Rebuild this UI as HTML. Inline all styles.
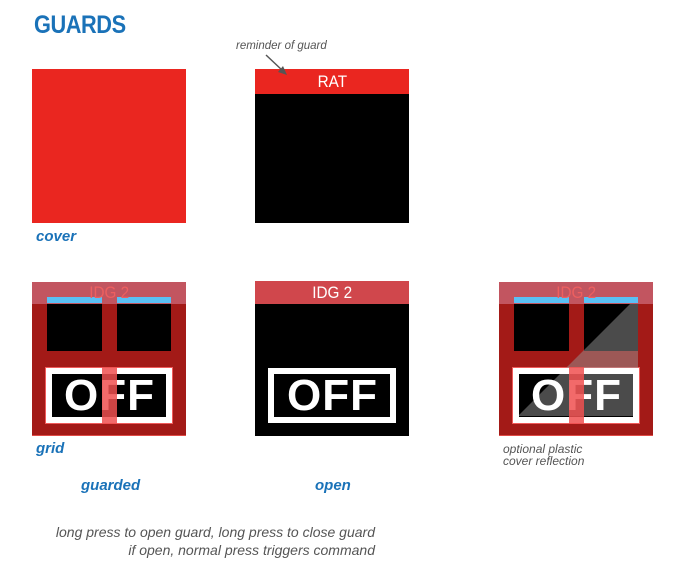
<!DOCTYPE html>
<html><head><style>
*{margin:0;padding:0;box-sizing:border-box}
body{width:685px;height:578px;background:#fff;position:relative;overflow:hidden;font-family:"Liberation Sans",sans-serif}
.a{position:absolute}
.lbl{position:absolute;color:#1a72b8;font-weight:bold;font-style:italic;font-size:15px}
.off{position:absolute;border:6px solid #fff;color:#fff;font-weight:bold;font-size:44px;text-align:center;line-height:43px;letter-spacing:1px;text-indent:1px}
.hdr{position:absolute;color:#fff;font-size:17px;text-align:center;line-height:23px}
.hdr span{display:inline-block;transform:scaleX(0.9)}
.gray{color:#555;font-style:italic;font-size:12.5px;position:absolute}
</style></head><body>
<div class="a" style="left:34px;top:11px;color:#1a72b8;font-weight:bold;font-size:25px;letter-spacing:-0.5px;transform:scaleX(0.87);transform-origin:left">GUARDS</div>

<div class="a" style="left:32px;top:69px;width:154px;height:154px;background:#ea2620"></div>
<div class="lbl" style="left:36px;top:228px">cover</div>

<div class="gray" style="left:236px;top:40px;font-size:11.5px">reminder of guard</div>
<div class="a" style="left:255px;top:69px;width:154px;height:154px;background:#000"></div>
<div class="hdr" style="left:255px;top:69px;width:154px;height:25px;background:#ea2620;line-height:25px"><span>RAT</span></div>
<svg class="a" style="left:260px;top:50px" width="40" height="30"><line x1="6" y1="5" x2="23" y2="21" stroke="#555" stroke-width="1.5"/><polygon points="27,25 18,22 23,16" fill="#555"/></svg>

<!-- grid -->
<div class="a" style="left:32px;top:282px;width:154px;height:154px;background:#a31a17;border-bottom:1px solid #e04a45"></div>
<div class="a" style="left:47px;top:303px;width:55px;height:48px;background:#000"></div>
<div class="a" style="left:117px;top:303px;width:54px;height:48px;background:#000"></div>
<div class="a" style="left:45px;top:367px;width:128px;height:57px;background:#f05a5a"></div>
<div class="off" style="left:46px;top:368px;width:126px;height:55px;background:#000">OFF</div>
<div class="a" style="left:102px;top:367px;width:15px;height:57px;background:rgba(240,80,80,0.85)"></div>
<div class="a" style="left:32px;top:282px;width:154px;height:22px;background:#c25560"></div>
<div class="a" style="left:47px;top:297px;width:55px;height:6px;background:#5ac0f5"></div>
<div class="a" style="left:117px;top:297px;width:54px;height:6px;background:#5ac0f5"></div>
<div class="hdr" style="left:32px;top:281px;width:154px;color:#ee5f5f"><span>IDG 2</span></div>
<div class="lbl" style="left:36px;top:440px">grid</div>
<div class="lbl" style="left:81px;top:477px">guarded</div>

<!-- open -->
<div class="a" style="left:255px;top:282px;width:154px;height:154px;background:#000"></div>
<div class="hdr" style="left:255px;top:281px;width:154px;height:23px;background:#d0474c"><span>IDG 2</span></div>
<div class="off" style="left:268px;top:368px;width:128px;height:55px;background:#000">OFF</div>
<div class="lbl" style="left:315px;top:477px">open</div>

<!-- reflection -->
<div class="a" style="left:499px;top:282px;width:154px;height:154px;background:#a31a17;border-bottom:1px solid #e04a45"></div>
<div class="a" style="left:514px;top:303px;width:55px;height:48px;background:#000"></div>
<div class="a" style="left:584px;top:303px;width:54px;height:48px;background:#000"></div>
<div class="a" style="left:512px;top:367px;width:128px;height:57px;background:#f05a5a"></div>
<div class="a" style="left:513px;top:368px;width:126px;height:55px;background:#000"></div>
<svg class="a" style="left:499px;top:282px" width="154" height="154"><polygon points="19,134 139,14 139,134" fill="rgba(150,150,150,0.5)"/></svg>
<div class="off" style="left:513px;top:368px;width:126px;height:55px">OFF</div>
<div class="a" style="left:569px;top:367px;width:15px;height:57px;background:rgba(240,80,80,0.85)"></div>
<div class="a" style="left:499px;top:282px;width:154px;height:22px;background:#c25560"></div>
<div class="a" style="left:514px;top:297px;width:55px;height:6px;background:#5ac0f5"></div>
<div class="a" style="left:584px;top:297px;width:54px;height:6px;background:#5ac0f5"></div>
<div class="hdr" style="left:499px;top:281px;width:154px;color:#ee5f5f"><span>IDG 2</span></div>
<div class="gray" style="left:503px;top:443px;line-height:12px;font-size:12px">optional plastic<br>cover reflection</div>

<div class="gray" style="left:20px;top:523px;width:355px;text-align:right;line-height:18px;font-size:14px">long press to open guard, long press to close guard<br>if open, normal press triggers command</div>
</body></html>
